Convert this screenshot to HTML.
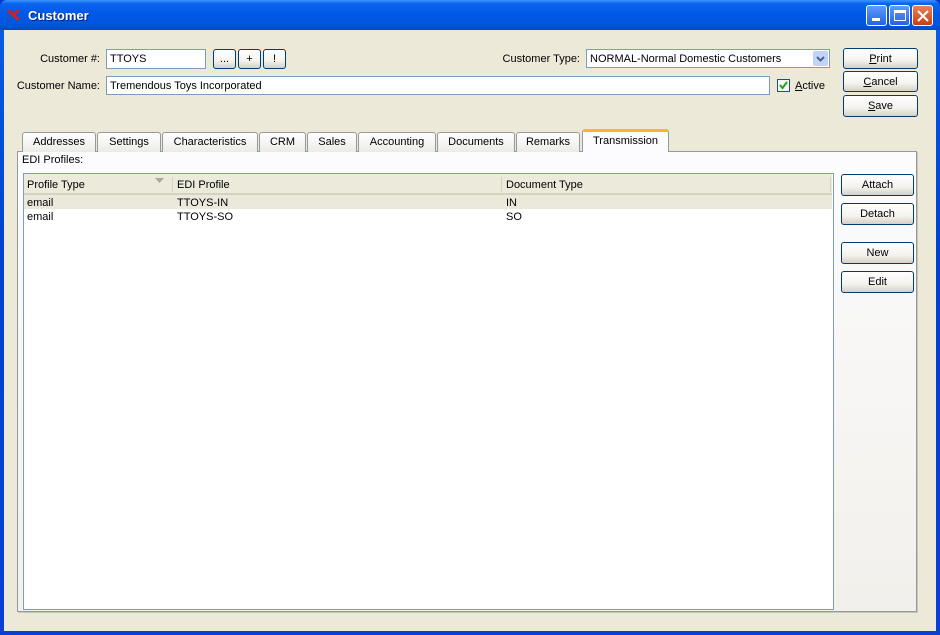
<!DOCTYPE html>
<html><head><style>
*{box-sizing:border-box;margin:0;padding:0}
body{width:940px;height:635px;overflow:hidden;font-family:"Liberation Sans",sans-serif;font-size:11px;color:#000;background:#0831d9}
.win{position:absolute;left:0;top:0;width:940px;height:635px;background:linear-gradient(#0a5fe6,#0041d0 40%,#0a3fd6);border-radius:7px 7px 0 0}
.title{position:absolute;left:0;top:0;width:940px;height:30px;background:linear-gradient(#3d95ff 0,#0a64ec 12%,#0058e6 50%,#0055dc 85%,#0048c8);border-radius:7px 7px 0 0}
.title span{position:absolute;left:28px;top:8px;color:#fff;font-weight:bold;font-size:13px;font-family:"Liberation Sans",sans-serif;text-shadow:1px 1px #0a1f80}
.a{position:absolute}
.lbl{position:absolute;white-space:nowrap}
.inp{position:absolute;background:#fff;border:1px solid #7f9db9;padding:3px 3px 0;white-space:nowrap}
.btn{position:absolute;border:1px solid #003c74;border-radius:3px;background:linear-gradient(#fff,#f4f3ee 60%,#d6d0c5);text-align:center;line-height:21px}
.tb{position:absolute;width:21px;height:21px;top:5px;border:1px solid #fff;border-radius:3px}
.tab{position:absolute;top:132px;height:20px;border:1px solid #919b9c;border-bottom:none;border-radius:3px 3px 0 0;background:linear-gradient(#fff,#ecebe5);text-align:center;line-height:19px}
</style></head><body>
<div class="win">
<div class="title"><span>Customer</span>
<svg class="a" style="left:7px;top:9px" width="14" height="12"><path d="M1 1L12 11M12 1L6 6" stroke="#d02020" stroke-width="3"/><path d="M1 11L5 7" stroke="#2050b0" stroke-width="3"/></svg>
<div class="tb" style="left:866px;background:linear-gradient(#5c9bff,#2663e0)"><div class="a" style="left:5px;top:12px;width:8px;height:3px;background:#fff"></div></div>
<div class="tb" style="left:889px;background:linear-gradient(#5c9bff,#2663e0)"><div class="a" style="left:4px;top:4px;width:12px;height:11px;border:1px solid #fff;border-top-width:3px"></div></div>
<div class="tb" style="left:912px;background:linear-gradient(#e9815a,#c93f12)"><svg class="a" style="left:4px;top:4px" width="12" height="12"><path d="M1 1L11 11M11 1L1 11" stroke="#fff" stroke-width="2"/></svg></div>
</div>
</div>
<div class="a" style="left:4px;top:30px;width:932px;height:601px;background:#ece9d8"></div>

<div class="lbl" style="right:840px;top:53px">Customer #:</div>
<div class="inp" style="left:106px;top:49px;width:100px;height:20px">TTOYS</div>
<div class="btn" style="left:213px;top:49px;width:23px;height:20px;line-height:19px">...</div>
<div class="btn" style="left:238px;top:49px;width:23px;height:20px;line-height:19px">+</div>
<div class="btn" style="left:263px;top:49px;width:23px;height:20px;line-height:19px">!</div>
<div class="lbl" style="right:360px;top:53px">Customer Type:</div>
<div class="inp" style="left:586px;top:49px;width:244px;height:19px">NORMAL-Normal Domestic Customers
<div class="a" style="right:1px;top:1px;width:15px;height:15px;background:#c1d3fb;border-radius:2px"><svg width="15" height="15"><path d="M4 6L7.5 9.5L11 6" stroke="#4d6185" stroke-width="2" fill="none"/></svg></div></div>
<div class="lbl" style="right:840px;top:80px">Customer Name:</div>
<div class="inp" style="left:106px;top:76px;width:664px;height:19px">Tremendous Toys Incorporated</div>
<div class="a" style="left:777px;top:79px;width:13px;height:13px;border:1px solid #1c5180;background:#f4f4f0"><svg width="11" height="11"><path d="M2 5L4.5 8L9 2" stroke="#21a121" stroke-width="2" fill="none"/></svg></div>
<div class="lbl" style="left:795px;top:80px"><u>A</u>ctive</div>
<div class="btn" style="left:843px;top:48px;width:75px;height:21px"><u>P</u>rint</div>
<div class="btn" style="left:843px;top:71px;width:75px;height:21px"><u>C</u>ancel</div>
<div class="btn" style="left:843px;top:95px;width:75px;height:22px"><u>S</u>ave</div>

<div class="a" style="left:17px;top:151px;width:900px;height:461px;border:1px solid #919b9c;background:linear-gradient(#fcfcfe,#f2f0eb);box-shadow:1px 1px 0 #c8c5b8"></div>
<div class="tab" style="left:22px;width:74px">Addresses</div>
<div class="tab" style="left:97px;width:64px">Settings</div>
<div class="tab" style="left:162px;width:96px">Characteristics</div>
<div class="tab" style="left:259px;width:47px">CRM</div>
<div class="tab" style="left:307px;width:50px">Sales</div>
<div class="tab" style="left:358px;width:78px">Accounting</div>
<div class="tab" style="left:437px;width:78px">Documents</div>
<div class="tab" style="left:516px;width:64px">Remarks</div>
<div class="tab" style="left:582px;top:129px;width:87px;height:23px;background:#fcfcfe;border-top:3px solid #f9b436;line-height:18px">Transmission</div>
<div class="lbl" style="left:22px;top:154px">EDI Profiles:</div>

<div class="a" style="left:23px;top:173px;width:811px;height:437px;border:1px solid #7f9db9;background:#fff"></div>
<div class="a" style="left:24px;top:174px;width:808px;height:21px;background:#ebeadb;border-bottom:2px solid #d6d2c2"></div>
<div class="lbl" style="left:27px;top:179px">Profile Type</div>
<svg class="a" style="left:155px;top:178px" width="10" height="6"><path d="M0 0H9L4.5 5Z" fill="#aca899"/></svg>
<div class="a" style="left:172px;top:177px;width:1px;height:15px;background:#d6d2c2"></div>
<div class="lbl" style="left:177px;top:179px">EDI Profile</div>
<div class="a" style="left:501px;top:177px;width:1px;height:15px;background:#d6d2c2"></div>
<div class="lbl" style="left:506px;top:179px">Document Type</div>
<div class="a" style="left:830px;top:177px;width:1px;height:15px;background:#d6d2c2"></div>
<div class="a" style="left:24px;top:195px;width:808px;height:14px;background:#ebe9dc"></div>
<div class="lbl" style="left:27px;top:197px">email</div>
<div class="lbl" style="left:177px;top:197px">TTOYS-IN</div>
<div class="lbl" style="left:506px;top:197px">IN</div>
<div class="lbl" style="left:27px;top:211px">email</div>
<div class="lbl" style="left:177px;top:211px">TTOYS-SO</div>
<div class="lbl" style="left:506px;top:211px">SO</div>

<div class="btn" style="left:841px;top:174px;width:73px;height:22px">Attach</div>
<div class="btn" style="left:841px;top:203px;width:73px;height:22px">Detach</div>
<div class="btn" style="left:841px;top:242px;width:73px;height:22px">New</div>
<div class="btn" style="left:841px;top:271px;width:73px;height:22px">Edit</div>
</body></html>
